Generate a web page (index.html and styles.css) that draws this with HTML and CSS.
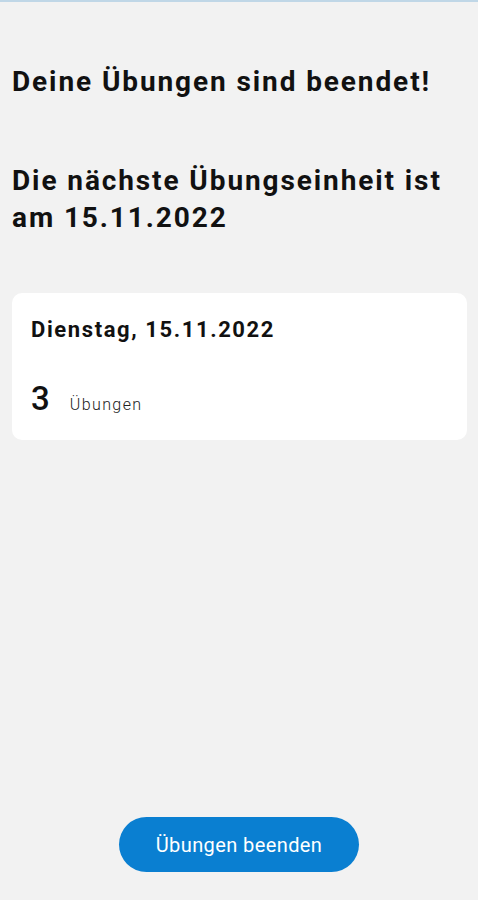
FILE: index.html
```html
<!DOCTYPE html>
<html lang="de">
<head>
  <meta charset="UTF-8">
  <meta name="viewport" content="width=device-width, initial-scale=1.0">
  <title>Übungen beendet</title>
  <link rel="stylesheet" href="styles.css">
</head>
<body>
  <div class="screen">
    <div class="content">
      <h2 class="title">Deine Übungen sind beendet!</h2>
      <h2 class="title next">Die nächste Übungseinheit ist am 15.11.2022</h2>

      <div class="card">
        <div class="card-date">Dienstag, 15.11.2022</div>
        <div class="card-count">
          <span class="count">3</span>
          <span class="count-label">Übungen</span>
        </div>
      </div>
    </div>

    <div class="footer">
      <button class="finish-btn">Übungen beenden</button>
    </div>
  </div>
</body>
</html>
```

FILE: styles.css
```css
html, body {
  margin: 0;
  padding: 0;
}
body {
  font-family: Roboto, "Noto Sans", Arial, sans-serif;
  background-color: #f2f2f2;
  color: #111;
}
.screen {
  height: 900px;
  display: flex;
  flex-direction: column;
  border-top: 2px solid #c0d7e7;
  box-sizing: border-box;
}
.content {
  flex: 1;
  padding: 0 11px 0 12px;
}
.title {
  font-size: 28px;
  font-weight: 700;
  line-height: 37px;
  letter-spacing: 1.9px;
  margin: 0;
}
.title:first-child {
  margin-top: 61px;
}
.next {
  margin-top: 62px;
}
.card {
  margin-top: 57px;
  background: #fff;
  border-radius: 10px;
  padding: 23px 19px 16px;
}
.card-date {
  font-size: 22px;
  font-weight: 700;
  line-height: 28px;
  letter-spacing: 1.6px;
}
.card-count {
  display: flex;
  align-items: baseline;
  gap: 20px;
  margin-top: 36px;
  line-height: 38px;
}
.count {
  font-size: 33px;
  font-weight: 500;
}
.count-label {
  font-size: 16px;
  font-weight: 300;
  letter-spacing: 1.4px;
  color: #222;
}
.footer {
  display: flex;
  justify-content: center;
  padding-bottom: 28px;
}
.finish-btn {
  background-color: #0a7fd1;
  color: #fff;
  border: none;
  border-radius: 28px;
  width: 240px;
  height: 55px;
  font-family: Roboto, Arial, sans-serif;
  font-size: 20px;
  letter-spacing: 0.4px;
  cursor: pointer;
}
```
